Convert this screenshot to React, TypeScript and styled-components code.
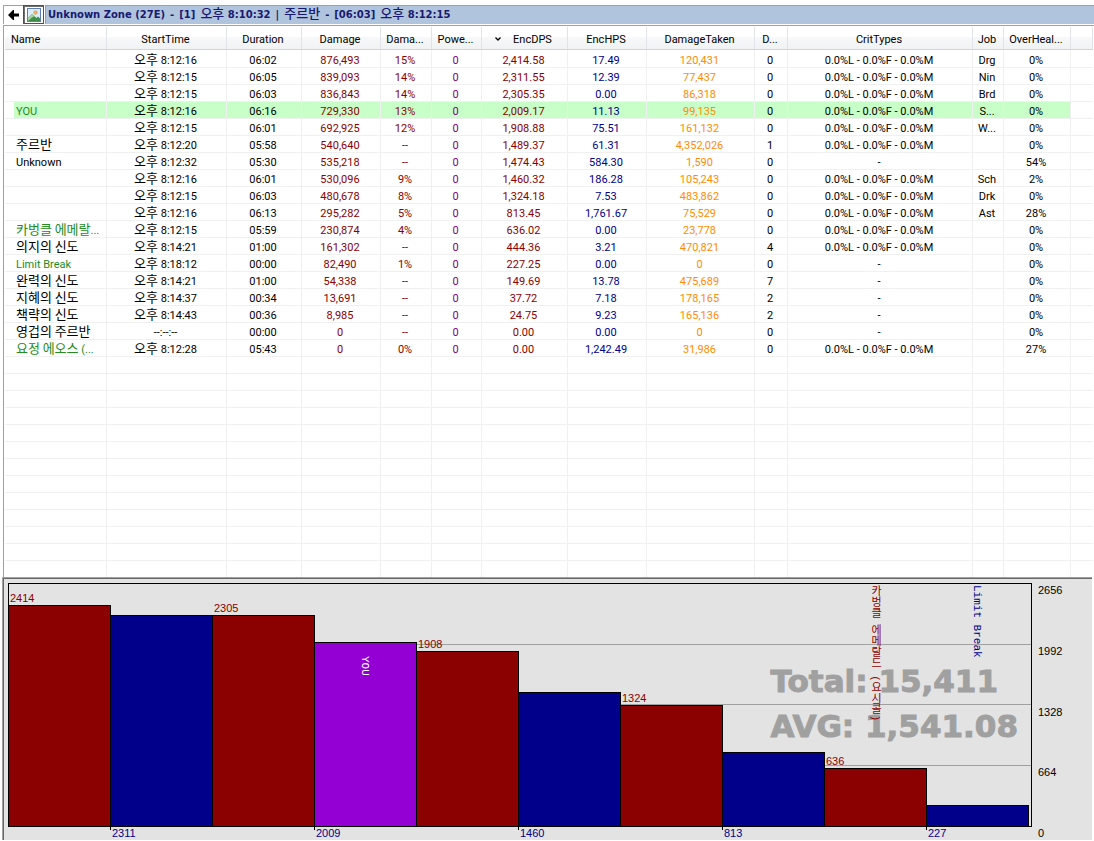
import React from 'react';
import styled, { createGlobalStyle } from 'styled-components';

const GlobalStyle = createGlobalStyle`
  * { box-sizing: border-box; }
  body {
    margin: 0;
    background: #fff;
    color: #000;
    font-family: Roboto, 'Noto Sans CJK KR', sans-serif;
    font-size: 11px;
  }
  button { font: inherit; color: inherit; background: none; border: 0; padding: 0; margin: 0; }
`;

const Page = styled.main`
  display: flex;
  flex-direction: column;
  height: 100vh;
  min-height: 600px;
  padding-bottom: 1px;
`;

const Toolbar = styled.header`
  display: flex;
  height: 25px;
  padding: 5px 0 1px 3px;
`;

const ToolButton = styled.button<{ $active?: boolean }>`
  display: flex;
  align-items: center;
  justify-content: center;
  width: ${p => (p.$active ? 21 : 20)}px;
  height: 19px;
  border: ${p => (p.$active ? '1px solid #505050' : '0')};
  box-shadow: ${p => (p.$active ? 'inset 1px 1px #707070' : 'inset 1px 1px #a0a0a0')};
`;

const Title = styled.h1`
  flex: 1;
  display: flex;
  gap: 5px;
  margin: 0 0 0 1px;
  padding-left: 2px;
  border: solid #a0a0a0;
  border-width: 1px 0 0 1px;
  background: #b0c4de;
  color: #191970;
  font: bold 10px/18px 'DejaVu Sans', 'Noto Sans CJK KR', sans-serif;
  white-space: nowrap;
`;

const Hangul = styled.span<{ $size: number; $weight?: number }>`
  font-family: 'Noto Sans CJK KR', sans-serif;
  font-size: ${p => p.$size}px;
  font-weight: ${p => p.$weight ?? 'inherit'};
  line-height: 1px;
`;

const ListPanel = styled.section`
  flex: 1 1 0;
  min-height: 0;
  margin-left: 3px;
  padding: 1px 1px 0 1px;
  border: solid #a0a0a0;
  border-width: 1px 0 0 1px;
  overflow: hidden;
`;

const Table = styled.table`
  width: 100%;
  table-layout: fixed;
  border-collapse: separate;
  border-spacing: 0;
`;

const Col = styled.col<{ $w?: number }>`
  width: ${p => (p.$w ? `${p.$w}px` : 'auto')};
`;

const HeadCell = styled.th`
  height: 23px;
  padding: 0;
  font-weight: normal;
  border-bottom: 1px solid #d5d5d5;
  background: linear-gradient(#fff 0 45%, #f7f8fa 45%, #f1f2f4);
  box-shadow: inset -1px 0 #e2e3ea;
`;

const HeadButton = styled.button<{ $left?: boolean }>`
  display: flex;
  align-items: center;
  justify-content: ${p => (p.$left ? 'flex-start' : 'center')};
  gap: 12px;
  width: 100%;
  height: 22px;
  padding: 2px 3px 0 ${p => (p.$left ? 6 : 0)}px;
  white-space: nowrap;
`;

const Row = styled.tr<{ $selected?: boolean }>`
  td { background-color: ${p => (p.$selected ? '#c8ffc8' : 'transparent')}; }
  td:first-child {
    background: ${p => (p.$selected ? 'linear-gradient(90deg, #fff 9px, #c8ffc8 9px)' : 'none')};
  }
  td:last-child { background: none; border-right: 0; }
`;

const Spacer = styled.tr`
  height: 1px;
`;

const SpacerCell = styled.td`
  padding: 0;
  border-right: 1px solid #f0f0f0;
  &:last-child { border-right: 0; }
`;

const Cell = styled.td<{ $color?: string; $left?: boolean }>`
  height: 17px;
  padding: ${p => (p.$left ? '3px 0 0 11px' : '3px 2px 0 0')};
  border: solid #f0f0f0;
  border-width: 0 1px 1px 0;
  color: ${p => p.$color ?? '#000'};
  line-height: 13px;
  text-align: ${p => (p.$left ? 'left' : 'center')};
  white-space: nowrap;
`;

const ChartPanel = styled.section`
  display: grid;
  grid-template-columns: 1fr 60px;
  margin: 0 2px 0 2px;
  padding: 5px 0 0 5px;
  border: solid #a0a0a0;
  border-width: 1px 0 0 1px;
  box-shadow: inset 1px 1px #696969;
  background: #e3e3e3;
  font: 11px/13px 'Liberation Sans', Arial, sans-serif;
`;

const Plot = styled.div`
  position: relative;
  height: 244px;
  border: 1px solid #000;
`;

const GridLines = styled.div`
  position: absolute;
  inset: 0;
  display: grid;
  grid-template-rows: repeat(4, 1fr);
`;

const GridLine = styled.div`
  border-bottom: 1px solid #a0a0a0;
  &:last-child { border: 0; }
`;

const Watermark = styled.p`
  position: absolute;
  top: 75px;
  right: 13px;
  margin: 0;
  color: #a0a0a0;
  font: bold 31px/45px 'DejaVu Sans', sans-serif;
  -webkit-text-stroke: 1px #a0a0a0;
  white-space: pre-line;
`;

const Bars = styled.div`
  position: relative;
  display: flex;
  height: 100%;
  padding-right: 2px;
`;

const BarSlot = styled.div`
  position: relative;
  flex: 1;
  display: flex;
  flex-direction: column;
  justify-content: flex-end;
`;

const BarValue = styled.span`
  padding-left: 1px;
  color: #8b0000;
`;

const Bar = styled.div<{ $fill: string }>`
  display: flex;
  justify-content: center;
  padding: 13px 2px 0 0;
  margin-left: -1px;
  border: 1px solid #000;
  border-bottom: 0;
  background: ${p => p.$fill};
`;

const VerticalName = styled.span<{ $color: string; $floating?: boolean }>`
  ${p => (p.$floating ? 'position: absolute; top: 1px; left: 0; right: 4px;' : '')}
  display: flex;
  flex-direction: column;
  justify-content: center;
  writing-mode: vertical-rl;
  color: ${p => p.$color};
  font: 11px/13px 'Liberation Mono', 'Noto Sans CJK KR', monospace;
  white-space: nowrap;
`;

const ValueAxis = styled.div`
  grid-row: 1 / span 2;
  grid-column: 2;
  display: flex;
  flex-direction: column;
  justify-content: space-between;
  padding: 1px 0 0 6px;
`;

const RankAxis = styled.div`
  display: flex;
  height: 13px;
  padding-right: 4px;
  color: #00008b;
`;

const AxisSlot = styled.div`
  flex: 1;
  display: flex;
  gap: 1px;
`;

const Tick = styled.i`
  width: 1px;
  height: 3px;
  background: #000;
`;

/** Wraps runs of Hangul so they can carry their own size. */
function Mixed({ text, size, weight }: { text: string; size: number; weight?: number }) {
  return (
    <>
      {text.split(/([\uac00-\ud7a3]+)/).map((part, i) =>
        i % 2 ? (
          <Hangul key={i} $size={size} $weight={weight}>{part}</Hangul>
        ) : (
          part
        ),
      )}
    </>
  );
}

const RED = '#8b0000';
const BLUE = '#00008b';
const GREEN = '#228b22';

const titleParts = [
  'Unknown Zone (27E)', '-', '[1]', '오후 8:10:32', '|', '주르반', '-', '[06:03]', '오후 8:12:15',
];

const columns: { label: string; width?: number; color?: string; sorted?: boolean }[] = [
  { label: 'Name', width: 102 },
  { label: 'StartTime', width: 120 },
  { label: 'Duration', width: 75 },
  { label: 'Damage', width: 79, color: RED },
  { label: 'Dama...', width: 51, color: RED },
  { label: 'Powe...', width: 50, color: '#800080' },
  { label: 'EncDPS', width: 86, color: RED, sorted: true },
  { label: 'EncHPS', width: 79, color: BLUE },
  { label: 'DamageTaken', width: 108, color: '#ff8c00' },
  { label: 'D...', width: 33 },
  { label: 'CritTypes', width: 185 },
  { label: 'Job', width: 31 },
  { label: 'OverHeal...', width: 67 },
  { label: '' },
];

const CRIT = '0.0%L - 0.0%F - 0.0%M';

const rows: string[][] = [
  ['', '오후 8:12:16', '06:02', '876,493', '15%', '0', '2,414.58', '17.49', '120,431', '0', CRIT, 'Drg', '0%'],
  ['', '오후 8:12:15', '06:05', '839,093', '14%', '0', '2,311.55', '12.39', '77,437', '0', CRIT, 'Nin', '0%'],
  ['', '오후 8:12:15', '06:03', '836,843', '14%', '0', '2,305.35', '0.00', '86,318', '0', CRIT, 'Brd', '0%'],
  ['YOU', '오후 8:12:16', '06:16', '729,330', '13%', '0', '2,009.17', '11.13', '99,135', '0', CRIT, 'S...', '0%'],
  ['', '오후 8:12:15', '06:01', '692,925', '12%', '0', '1,908.88', '75.51', '161,132', '0', CRIT, 'W...', '0%'],
  ['주르반', '오후 8:12:20', '05:58', '540,640', '--', '0', '1,489.37', '61.31', '4,352,026', '1', CRIT, '', '0%'],
  ['Unknown', '오후 8:12:32', '05:30', '535,218', '--', '0', '1,474.43', '584.30', '1,590', '0', '-', '', '54%'],
  ['', '오후 8:12:16', '06:01', '530,096', '9%', '0', '1,460.32', '186.28', '105,243', '0', CRIT, 'Sch', '2%'],
  ['', '오후 8:12:15', '06:03', '480,678', '8%', '0', '1,324.18', '7.53', '483,862', '0', CRIT, 'Drk', '0%'],
  ['', '오후 8:12:16', '06:13', '295,282', '5%', '0', '813.45', '1,761.67', '75,529', '0', CRIT, 'Ast', '28%'],
  ['카벙클 에메랄...', '오후 8:12:15', '05:59', '230,874', '4%', '0', '636.02', '0.00', '23,778', '0', CRIT, '', '0%'],
  ['의지의 신도', '오후 8:14:21', '01:00', '161,302', '--', '0', '444.36', '3.21', '470,821', '4', CRIT, '', '0%'],
  ['Limit Break', '오후 8:18:12', '00:00', '82,490', '1%', '0', '227.25', '0.00', '0', '0', '-', '', '0%'],
  ['완력의 신도', '오후 8:14:21', '01:00', '54,338', '--', '0', '149.69', '13.78', '475,689', '7', '-', '', '0%'],
  ['지혜의 신도', '오후 8:14:37', '00:34', '13,691', '--', '0', '37.72', '7.18', '178,165', '2', '-', '', '0%'],
  ['책략의 신도', '오후 8:14:43', '00:36', '8,985', '--', '0', '24.75', '9.23', '165,136', '2', '-', '', '0%'],
  ['영겁의 주르반', '--:--:--', '00:00', '0', '--', '0', '0.00', '0.00', '0', '0', '-', '', '0%'],
  ['요정 에오스 (...', '오후 8:12:28', '05:43', '0', '0%', '0', '0.00', '1,242.49', '31,986', '0', CRIT, '', '27%'],
];

const allies = ['YOU', '카벙클 에메랄...', 'Limit Break', '요정 에오스 (...'];
const EMPTY_ROWS = 40;

const bars: { value: number; name?: string }[] = [
  { value: 2414.58 },
  { value: 2311.55 },
  { value: 2305.35 },
  { value: 2009.17, name: 'YOU' },
  { value: 1908.88 },
  { value: 1460.32 },
  { value: 1324.18 },
  { value: 813.45 },
  { value: 636.02, name: '카벙클 에메랄드 (요시콜)' },
  { value: 227.25, name: 'Limit Break' },
];
const AXIS_MAX = 2656;
const AXIS_HEIGHT = 243;

function cellColor(name: string, col: number) {
  if (col === 0) return allies.includes(name) ? GREEN : '#000';
  return columns[col].color;
}

function ArrowIcon() {
  return (
    <svg width="11" height="10" viewBox="0 0 11 10" aria-hidden="true">
      <path d="M0 5 5 0h1v3.500h5v3H6V10H5z" fill="#000" />
    </svg>
  );
}

function PictureIcon() {
  return (
    <svg width="14" height="14" viewBox="0 0 14 14" aria-hidden="true">
      <rect x="0.5" y="0.5" width="13" height="13" fill="#fff" stroke="#5f7fb0" />
      <rect x="1" y="1" width="12" height="12" fill="#dcecf9" />
      <circle cx="8.500" cy="4.500" r="1.800" fill="#f3b46a" stroke="#d98a3a" strokeWidth=".6" />
      <path d="M1 13v-3l4-4 4.500 4 1.500-1.500 2 2V13z" fill="#3f8f4a" />
      <path d="M1 10l4-4 2.500 2.300-2.500 1.200L1 13z" fill="#a5d39a" />
    </svg>
  );
}

function SortIcon() {
  return (
    <svg width="6" height="4" viewBox="0 0 6 4" aria-hidden="true">
      <path d="M.5.5 3 3 5.500.5" fill="none" stroke="#000" strokeWidth="1.300" />
    </svg>
  );
}

export default function App() {
  return (
    <Page>
      <GlobalStyle />
      <Toolbar>
        <ToolButton aria-label="Back"><ArrowIcon /></ToolButton>
        <ToolButton $active aria-label="Show graph"><PictureIcon /></ToolButton>
        <Title>
          {titleParts.map((part, i) => (
            <span key={i}><Mixed text={part} size={13} weight={500} /></span>
          ))}
        </Title>
      </Toolbar>

      <ListPanel>
        <Table>
          <colgroup>
            {columns.map((c, i) => <Col key={i} $w={c.width} />)}
          </colgroup>
          <thead>
            <tr>
              {columns.map((c, i) => (
                <HeadCell key={i} scope="col">
                  {c.label && (
                    <HeadButton $left={i === 0}>
                      {c.sorted && <SortIcon />}
                      {c.label}
                    </HeadButton>
                  )}
                </HeadCell>
              ))}
            </tr>
          </thead>
          <tbody>
            <Spacer aria-hidden="true">
              {columns.map((_, c) => <SpacerCell key={c} />)}
            </Spacer>
            {rows.map((row, r) => (
              <Row key={r} $selected={row[0] === 'YOU'}>
                {columns.map((_, c) => (
                  <Cell key={c} $left={c === 0} $color={cellColor(row[0], c)}>
                    <Mixed text={row[c] ?? ''} size={13} />
                  </Cell>
                ))}
              </Row>
            ))}
            {Array.from({ length: EMPTY_ROWS }, (_, r) => (
              <Row key={`empty-${r}`} aria-hidden="true">
                {columns.map((_, c) => <Cell key={c} />)}
              </Row>
            ))}
          </tbody>
        </Table>
      </ListPanel>

      <ChartPanel aria-label="EncDPS graph">
        <Plot>
          <GridLines>
            {[0, 1, 2, 3].map(i => <GridLine key={i} />)}
          </GridLines>
          <Watermark>{'Total: 15,411\nAVG: 1,541.08'}</Watermark>
          <Bars>
            {bars.map(({ value, name }, i) => {
              const own = name === 'YOU';
              return (
                <BarSlot key={i}>
                  {i % 2 === 0 && <BarValue>{Math.floor(value)}</BarValue>}
                  <Bar
                    $fill={own ? '#9400d3' : i % 2 ? BLUE : RED}
                    style={{ height: Math.round((value / AXIS_MAX) * AXIS_HEIGHT) }}
                  >
                    {own && <VerticalName $color="#fff">{name}</VerticalName>}
                  </Bar>
                  {name && !own && (
                    <VerticalName $floating $color={i % 2 ? BLUE : RED}>{name}</VerticalName>
                  )}
                </BarSlot>
              );
            })}
          </Bars>
        </Plot>
        <RankAxis>
          {bars.map(({ value }, i) => (
            <AxisSlot key={i}>
              {i % 2 === 1 && (
                <>
                  <Tick />
                  <span>{Math.floor(value)}</span>
                </>
              )}
            </AxisSlot>
          ))}
        </RankAxis>
        <ValueAxis>
          {[2656, 1992, 1328, 664, 0].map(v => <span key={v}>{v}</span>)}
        </ValueAxis>
      </ChartPanel>
    </Page>
  );
}
